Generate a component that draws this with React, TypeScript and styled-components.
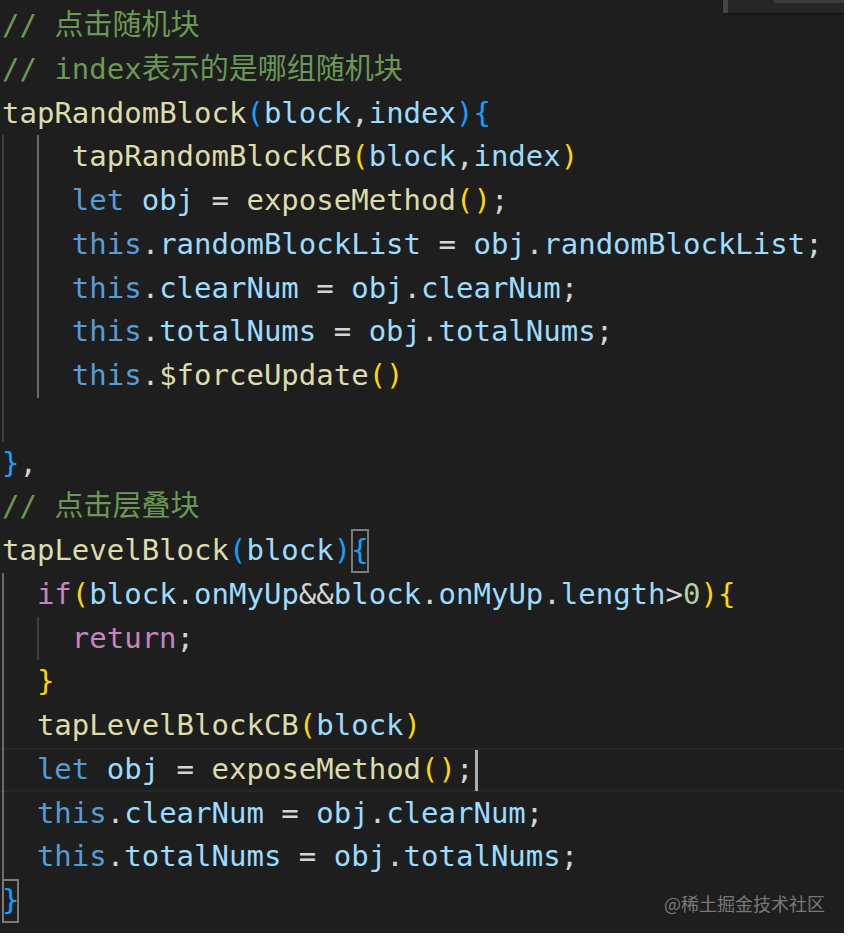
import React from "react";
import styled, { createGlobalStyle } from "styled-components";

const Global = createGlobalStyle`
  html, body { margin: 0; padding: 0; background: #ffffff; }
  #root { width: 852px; height: 940px; }
`;

const C = {
  comment: "#6a9955",
  fn: "#dcdcaa",
  variable: "#9cdcfe",
  keyword: "#569cd6",
  control: "#c586c0",
  number: "#b5cea8",
  plain: "#d4d4d4",
  b1: "#ffd700",
  b3: "#179fff",
};

const Editor = styled.div`
  position: relative;
  width: 844px;
  height: 933px;
  background: #1e1e1e;
  overflow: hidden;
  padding-top: 4px;
  box-sizing: border-box;
  font-family: "DejaVu Sans Mono", "Noto Sans CJK SC", monospace;
  font-size: 29px;
`;

const Line = styled.div<{ $current?: boolean }>`
  display: flex;
  align-items: stretch;
  height: 43.75px;
  line-height: 43.75px;
  padding-left: 2px;
  white-space: pre;
  box-shadow: ${(p) =>
    p.$current ? "inset 0 2px 0 #282828, inset 0 -2px 0 #282828" : "none"};
`;

const Guide = styled.span<{ $active?: boolean }>`
  display: inline-block;
  flex: none;
  width: 2ch;
  box-sizing: border-box;
  border-left: 2px solid ${(p) => (p.$active ? "#6a6a6a" : "#404040")};
`;

const Tok = styled.span<{ $c: string }>`
  color: ${(p) => p.$c};
`;

const Comment = styled.span`
  color: ${C.comment};
  font-family: "DejaVu Sans Mono", "Noto Sans CJK SC", monospace;
`;

const Match = styled.span<{ $c: string }>`
  display: inline-block;
  color: ${(p) => p.$c};
  box-shadow: inset 0 0 0 2px #7a7a7a;
`;

const Cursor = styled.span`
  display: inline-block;
  width: 3px;
  margin-left: 2px;
  background: #aeafad;
  align-self: stretch;
  margin-top: 2px;
  margin-bottom: 1px;
`;

const FindWidget = styled.div`
  position: absolute;
  top: 0;
  right: 0;
  width: 121px;
  height: 13px;
  background: #262626;
  border-left: 5px solid #454545;
  box-sizing: border-box;
  box-shadow: 0 1px 2px rgba(0, 0, 0, 0.5);
`;

const FindBar = styled.div`
  margin-left: 46px;
  height: 3px;
  background: #3a3a3a;
`;

const Watermark = styled.div`
  position: absolute;
  right: 19px;
  bottom: 18px;
  font-family: "Noto Sans CJK SC", "DejaVu Sans", sans-serif;
  font-size: 18px;
  line-height: 24px;
  color: rgba(200, 200, 200, 0.55);
`;

type T = [string, string];

const v = (s: string): T => [s, C.variable];
const f = (s: string): T => [s, C.fn];
const k = (s: string): T => [s, C.keyword];
const p = (s: string): T => [s, C.plain];
const ctl = (s: string): T => [s, C.control];
const n = (s: string): T => [s, C.number];
const g = (s: string): T => [s, C.b1];
const bl = (s: string): T => [s, C.b3];

const Toks = ({ t }: { t: T[] }) => (
  <>
    {t.map(([s, c], i) => (
      <Tok key={i} $c={c}>
        {s}
      </Tok>
    ))}
  </>
);

const thisAssign = (prop: string): T[] => [
  k("this"),
  p("."),
  v(prop),
  p(" = "),
  v("obj"),
  p("."),
  v(prop),
  p(";"),
];

export default function App() {
  return (
    <>
      <Global />
      <Editor>
        <Line>
          <Comment>// 点击随机块</Comment>
        </Line>
        <Line>
          <Comment>// index表示的是哪组随机块</Comment>
        </Line>
        <Line>
          <Toks
            t={[f("tapRandomBlock"), bl("("), v("block"), p(","), v("index"), bl(")"), bl("{")]}
          />
        </Line>
        <Line>
          <Guide />
          <Guide $active />
          <Toks t={[f("tapRandomBlockCB"), g("("), v("block"), p(","), v("index"), g(")")]} />
        </Line>
        <Line>
          <Guide />
          <Guide $active />
          <Toks t={[k("let"), p(" "), v("obj"), p(" = "), f("exposeMethod"), g("()"), p(";")]} />
        </Line>
        <Line>
          <Guide />
          <Guide $active />
          <Toks t={thisAssign("randomBlockList")} />
        </Line>
        <Line>
          <Guide />
          <Guide $active />
          <Toks t={thisAssign("clearNum")} />
        </Line>
        <Line>
          <Guide />
          <Guide $active />
          <Toks t={thisAssign("totalNums")} />
        </Line>
        <Line>
          <Guide />
          <Guide $active />
          <Toks t={[k("this"), p("."), f("$forceUpdate"), g("()")]} />
        </Line>
        <Line>
          <Guide />
        </Line>
        <Line>
          <Toks t={[bl("}"), p(",")]} />
        </Line>
        <Line>
          <Comment>// 点击层叠块</Comment>
        </Line>
        <Line>
          <Toks t={[f("tapLevelBlock"), bl("("), v("block"), bl(")")]} />
          <Match $c={C.b3}>{"{"}</Match>
        </Line>
        <Line>
          <Guide $active />
          <Toks
            t={[
              ctl("if"),
              g("("),
              v("block"),
              p("."),
              v("onMyUp"),
              p("&&"),
              v("block"),
              p("."),
              v("onMyUp"),
              p("."),
              v("length"),
              p(">"),
              n("0"),
              g(")"),
              g("{"),
            ]}
          />
        </Line>
        <Line>
          <Guide $active />
          <Guide />
          <Toks t={[ctl("return"), p(";")]} />
        </Line>
        <Line>
          <Guide $active />
          <Toks t={[g("}")]} />
        </Line>
        <Line>
          <Guide $active />
          <Toks t={[f("tapLevelBlockCB"), g("("), v("block"), g(")")]} />
        </Line>
        <Line $current>
          <Guide $active />
          <Toks t={[k("let"), p(" "), v("obj"), p(" = "), f("exposeMethod"), g("()"), p(";")]} />
          <Cursor />
        </Line>
        <Line>
          <Guide $active />
          <Toks t={thisAssign("clearNum")} />
        </Line>
        <Line>
          <Guide $active />
          <Toks t={thisAssign("totalNums")} />
        </Line>
        <Line>
          <Match $c={C.b3}>{"}"}</Match>
        </Line>
        <FindWidget>
          <FindBar />
        </FindWidget>
        <Watermark>@稀土掘金技术社区</Watermark>
      </Editor>
    </>
  );
}
